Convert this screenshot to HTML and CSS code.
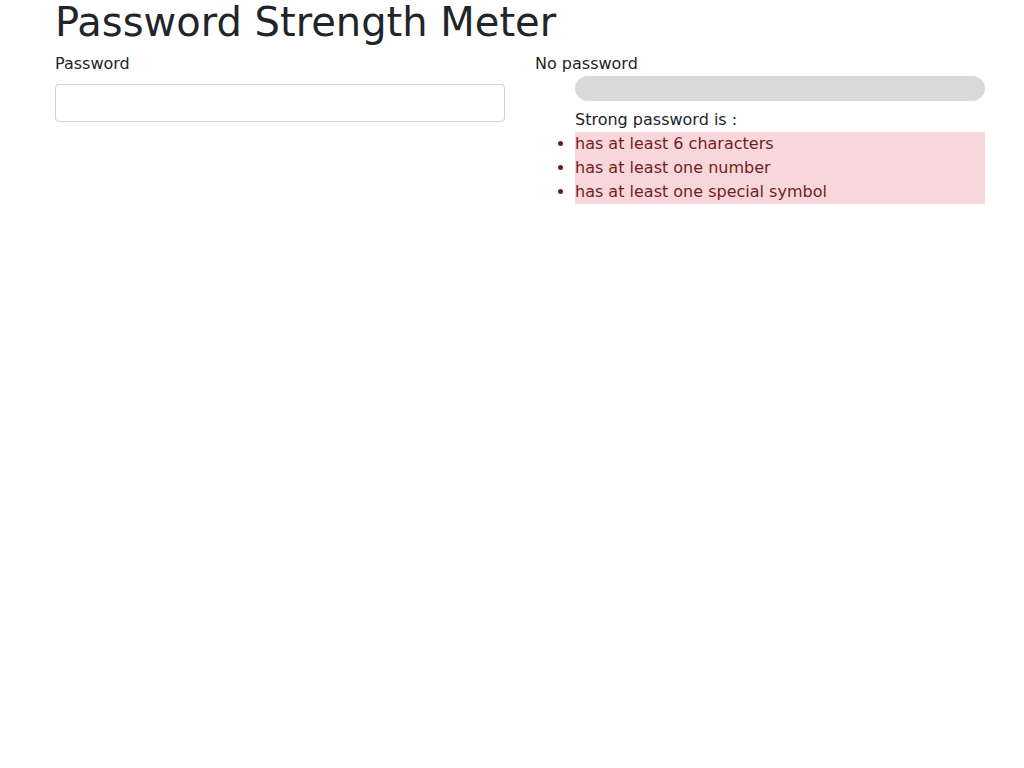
FILE: index.html
```html
<!DOCTYPE html>
<html>
<head>
<meta charset="utf-8">
<link rel="stylesheet" href="styles.css">
</head>
<body>
<div class="container">
  <h1 class="title">Password Strength Meter</h1>
  <div class="row">
    <div class="col">
      <label class="label" for="pw">Password</label>
      <input class="input" id="pw" type="password">
    </div>
    <div class="col">
      <div class="status">No password</div>
      <ul class="list">
        <li class="bar-item"><div class="bar"></div></li>
        <li class="heading">Strong password is :</li>
        <li class="rule">has at least 6 characters</li>
        <li class="rule">has at least one number</li>
        <li class="rule">has at least one special symbol</li>
      </ul>
    </div>
  </div>
</div>
</body>
</html>
```
FILE: styles.css
```css
html, body {
  margin: 0;
  padding: 0;
  background: #fff;
}
body {
  font-family: "DejaVu Sans", sans-serif;
  font-size: 16px;
  line-height: 24px;
  color: #212529;
  padding-left: 16px;
}
.container {
  width: 930px;
  margin: 0 auto;
}
.title {
  font-size: 40px;
  font-weight: 400;
  line-height: 44px;
  margin: 0 0 8px 0;
}
.row {
  display: grid;
  grid-template-columns: 450px 450px;
  column-gap: 30px;
}
.label {
  display: block;
  margin-bottom: 8px;
}
.input {
  display: block;
  box-sizing: border-box;
  width: 100%;
  height: 38px;
  border: 1px solid #ced4da;
  border-radius: 4px;
  padding: 6px 12px;
  font: inherit;
  background: #fff;
  margin: 0;
}
.list {
  margin: 0;
  padding: 0 0 0 40px;
}
.bar-item {
  list-style: none;
  padding-bottom: 7px;
}
.bar {
  height: 25px;
  border-radius: 13px;
  background: #d9d9d9;
}
.heading {
  list-style: none;
}
.rule {
  background: #f8d7da;
  color: #721c24;
}
```
